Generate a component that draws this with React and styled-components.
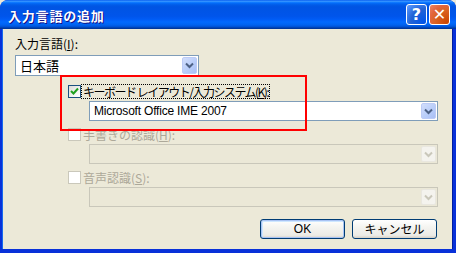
import React from 'react'
import styled, { createGlobalStyle } from 'styled-components'

const Global = createGlobalStyle`
  html, body { margin: 0; padding: 0; background: #ece9d8; }
  body { font-family: "Noto Sans CJK JP", "DejaVu Sans", sans-serif; }
`

const Window = styled.div`
  width: 456px;
  height: 253px;
  display: flex;
  flex-direction: column;
  background: #0831d9;
  border-radius: 8px 8px 0 0;
  overflow: hidden;
`

const TitleBar = styled.div`
  height: 29px;
  flex: none;
  display: flex;
  align-items: center;
  padding: 0 6px 0 8px;
  background: linear-gradient(to bottom, #0058ee 0%, #3a93ff 4%, #288eff 6%, #127dff 8%, #036ffc 10%, #0262ee 14%, #0057e5 20%, #0054e3 24%, #0055eb 56%, #005bf5 66%, #026afe 76%, #0062ef 86%, #0052d6 92%, #0040ab 96%, #003092 100%);
`

const Title = styled.div`
  flex: 1;
  color: #fff;
  font-size: 13px;
  font-weight: bold;
  letter-spacing: 0.8px;
  text-shadow: 1px 1px #0f1089;
  padding-top: 1px;
`

const TitleButton = styled.div`
  width: 21px;
  height: 21px;
  box-sizing: border-box;
  margin-left: 2px;
  border: 1px solid #fff;
  border-radius: 3px;
  display: flex;
  align-items: center;
  justify-content: center;
  color: #fff;
  font-family: "DejaVu Sans", sans-serif;
  font-weight: bold;
  font-size: 16px;
  background: ${(p) => p.close
    ? 'radial-gradient(circle at 90% 90%, #cc4600 0%, #dc6527 55%, #e2643c 70%, #ef8664 100%)'
    : 'radial-gradient(circle at 90% 90%, #0054e9 0%, #2263d5 55%, #4b8bf5 85%, #6ca0f7 100%)'};
`

const Body = styled.div`
  flex: 1;
  position: relative;
  background: #ece9d8;
  margin: 0 4px 4px 3px;
  padding: 8px 14px 0 12px;
  display: flex;
  flex-direction: column;
  box-shadow: -1px 0 0 #166aee, 1px 0 0 #001ea0;
  font-size: 12px;
  color: #000;
`

const Label = styled.div`
  height: 14px;
  line-height: 14px;
  color: ${(p) => (p.disabled ? '#aca899' : '#000')};
  white-space: nowrap;
`

const Combo = styled.div`
  box-sizing: border-box;
  height: ${(p) => p.h || 20}px;
  width: ${(p) => (p.w ? p.w + 'px' : 'auto')};
  margin-top: ${(p) => p.mt || 0}px;
  margin-left: ${(p) => p.ml || 0}px;
  border: 1px solid ${(p) => (p.disabled ? '#c9c7ba' : '#7f9db9')};
  background: ${(p) => (p.disabled ? '#ebe8d7' : '#fff')};
  display: flex;
  align-items: center;
  padding: 1px;
`

const ComboText = styled.div`
  flex: 1;
  padding-left: 3px;
  font-family: ${(p) => (p.latin ? '"Liberation Sans", sans-serif' : 'inherit')};
  font-size: ${(p) => (p.latin ? '12px' : '13px')};
  letter-spacing: ${(p) => (p.latin ? '-0.2px' : '0')};
  line-height: 16px;
`

const DropButton = styled.div`
  width: 15px;
  height: 100%;
  box-sizing: border-box;
  border-radius: 2px;
  display: flex;
  align-items: center;
  justify-content: center;
  border: 1px solid ${(p) => (p.disabled ? '#e9e7df' : '#bccbf6')};
  background: ${(p) => (p.disabled ? '#f4f3ee' : 'linear-gradient(135deg, #d2defc 0%, #b7ccf9 60%, #a9bff5 100%)')};
`

const Group = styled.div`
  margin-top: ${(p) => p.mt}px;
  display: flex;
  flex-direction: column;
`

const CheckRow = styled.div`
  height: 13px;
  display: flex;
  align-items: center;
  margin-left: 53px;
`

const Box = styled.div`
  width: 13px;
  height: 13px;
  box-sizing: border-box;
  border: 1px solid ${(p) => (p.disabled ? '#cac8bb' : '#1c5180')};
  background: ${(p) => (p.disabled ? '#fff' : 'linear-gradient(135deg, #dcdcd7 0%, #fff 90%)')};
  display: flex;
  align-items: center;
  justify-content: center;
`

const CheckText = styled.div`
  margin-left: 1px;
  padding: 0 1px;
  height: 13px;
  line-height: 13px;
  font-size: 12px;
  letter-spacing: ${(p) => p.ls || 0}px;
  color: ${(p) => (p.disabled ? '#aca899' : '#000')};
  outline: ${(p) => (p.focus ? '1px dotted #000' : 'none')};
  white-space: nowrap;
`

const RedBox = styled.div`
  position: absolute;
  left: 57px;
  top: 46px;
  width: 247px;
  height: 56px;
  box-sizing: border-box;
  border: 2px solid #ff0000;
  pointer-events: none;
`

const Buttons = styled.div`
  margin-top: 12px;
  display: flex;
  justify-content: flex-end;
  gap: 7px;
  padding-right: 1px;
`

const Button = styled.div`
  width: 85px;
  height: 20px;
  box-sizing: border-box;
  border: 1px solid #003c74;
  border-radius: 3px;
  background: linear-gradient(to bottom, #fff 0%, #f4f4f0 40%, #ecebe6 85%, #d6d0c5 100%);
  box-shadow: ${(p) => (p.primary ? 'inset 0 0 0 1px #a9c3f3, inset 1px 1px 0 1px #cee7ff' : 'none')};
  display: flex;
  align-items: center;
  justify-content: center;
  font-size: 12px;
  line-height: 14px;
  font-family: ${(p) => (p.latin ? '"Liberation Sans", sans-serif' : 'inherit')};
`

const Chevron = ({ disabled }) => (
  <svg width="9" height="7" viewBox="0 0 9 7">
    <path d="M1 1.5 L4.5 5 L8 1.5" fill="none" stroke={disabled ? '#c9c7ba' : '#4d6185'} strokeWidth="2" />
  </svg>
)

const Check = () => (
  <svg width="9" height="9" viewBox="0 0 9 9">
    <path d="M1 4 L3.5 6.5 L8 1.5" fill="none" stroke="#21a121" strokeWidth="2" />
  </svg>
)

const Select = ({ children, disabled, latin, ...rest }) => (
  <Combo disabled={disabled} {...rest}>
    <ComboText latin={latin}>{children}</ComboText>
    <DropButton disabled={disabled}>
      <Chevron disabled={disabled} />
    </DropButton>
  </Combo>
)

const Option = ({ checked, disabled, focus, label, ls, mt, value }) => (
  <Group mt={mt}>
    <CheckRow>
      <Box disabled={disabled}>{checked && <Check />}</Box>
      <CheckText disabled={disabled} focus={focus} ls={ls}>{label}</CheckText>
    </CheckRow>
    <Select disabled={disabled} latin mt={3} ml={74}>{value}</Select>
  </Group>
)

const App = () => (
  <>
    <Global />
    <Window>
      <TitleBar>
        <Title>入力言語の追加</Title>
        <TitleButton>?</TitleButton>
        <TitleButton close>✕</TitleButton>
      </TitleBar>
      <Body>
        <Label>入力言語(<u>I</u>):</Label>
        <Select mt={4} w={184} h={21}>日本語</Select>
        <Option
          mt={9}
          checked
          focus
          ls={-1.5}
          label={<>キーボード レイアウト/入力システム(<u>K</u>):</>}
          value="Microsoft Office IME 2007"
        />
        <Option mt={7} disabled label={<>手書きの認識(<u>H</u>):</>} />
        <Option mt={7} disabled label={<>音声認識(<u>S</u>):</>} />
        <Buttons>
          <Button primary latin>OK</Button>
          <Button>キャンセル</Button>
        </Buttons>
        <RedBox />
      </Body>
    </Window>
  </>
)

export default App
